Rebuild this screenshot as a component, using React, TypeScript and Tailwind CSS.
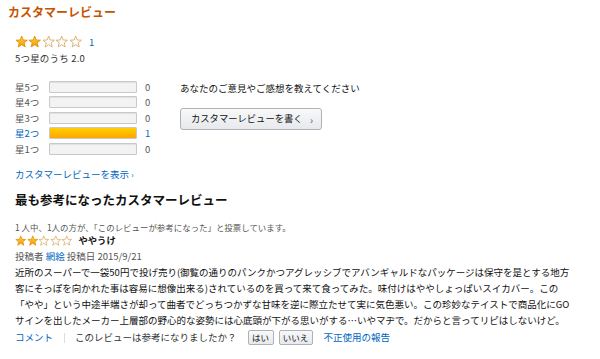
import React from "react";

function Star({ filled, size }: { filled: boolean; size: number }) {
  return (
    <svg width={size} height={size} viewBox="0 0 14 14">
      <defs>
        <linearGradient id="starfill" x1="0" y1="0" x2="0" y2="1">
          <stop offset="0" stopColor="#ffd24a" />
          <stop offset="1" stopColor="#f39c00" />
        </linearGradient>
      </defs>
      <path
        d="M7 1.1 L8.59 5.22 L12.99 5.45 L9.57 8.23 L10.7 12.5 L7 10.1 L3.3 12.5 L4.43 8.23 L1.01 5.45 L5.41 5.22 Z"
        fill={filled ? "url(#starfill)" : "#fff"}
        stroke={filled ? "#e08e00" : "#d8a862"}
        strokeWidth="0.9"
        strokeLinejoin="round"
      />
    </svg>
  );
}

function Stars({ value, size }: { value: number; size: number }) {
  return (
    <div className="flex items-center">
      {[1, 2, 3, 4, 5].map((i) => (
        <Star key={i} filled={i <= value} size={size} />
      ))}
    </div>
  );
}

const rows = [
  { label: "星5つ", count: 0, pct: 0 },
  { label: "星4つ", count: 0, pct: 0 },
  { label: "星3つ", count: 0, pct: 0 },
  { label: "星2つ", count: 1, pct: 100 },
  { label: "星1つ", count: 0, pct: 0 },
];

export default function App() {
  return (
    <div className="w-[600px] h-[359px] overflow-hidden bg-white pl-[8px] font-['Noto_Sans_CJK_JP',sans-serif] text-[#111]">
      <h2 className="h-[24px] leading-[24px] text-[12px] font-bold text-[#c45500]">カスタマーレビュー</h2>

      <div className="ml-[7px]">
        <div className="mt-[11px] h-[14px] flex items-center gap-[7px]">
          <Stars value={2} size={13.4} />
          <a className="text-[9.5px] text-[#0066c0]">1</a>
        </div>
        <div className="mt-[1px] h-[16px] leading-[16px] text-[9.5px] text-[#333] tracking-[0.2px]">5つ星のうち 2.0</div>

        <div className="mt-[13px] flex">
          <div className="w-[165px] flex flex-col">
            {rows.map((r) => {
              const active = r.count > 0;
              return (
                <div key={r.label} className="h-[15.5px] flex items-center text-[9.5px]">
                  <span className={`w-[34px] ${active ? "text-[#0066c0]" : "text-[#555]"}`}>{r.label}</span>
                  <div className="w-[88px] h-[12px] rounded-[1px] border border-[#c9c9c9] bg-[#f3f3f3] shadow-[inset_0_1px_1px_rgba(0,0,0,0.08)] overflow-hidden">
                    {r.pct > 0 && (
                      <div
                        className="h-full bg-gradient-to-b from-[#ffce00] to-[#ffa700]"
                        style={{ width: `${r.pct}%` }}
                      />
                    )}
                  </div>
                  <span className={`ml-[8px] ${active ? "text-[#0066c0]" : "text-[#555]"}`}>{r.count}</span>
                </div>
              );
            })}
          </div>
          <div className="flex flex-col items-start">
            <div className="mt-[1px] h-[16px] leading-[16px] text-[9.5px] text-[#111]">あなたのご意見やご感想を教えてください</div>
            <button className="mt-[12px] w-[142px] h-[22px] flex items-center justify-between pl-[10px] pr-[8px] rounded-[3px] border border-[#adb1b8] bg-gradient-to-b from-[#f7f8fa] to-[#e7e9ec] text-[9.3px] text-[#111] shadow-[0_1px_0_rgba(255,255,255,0.6)_inset]">
              <span>カスタマーレビューを書く</span>
              <span className="text-[10px] text-[#555]">›</span>
            </button>
          </div>
        </div>

        <a className="block mt-[9px] h-[16px] leading-[16px] text-[9.5px] text-[#0066c0]">
          カスタマーレビューを表示 <span className="text-[8px]">›</span>
        </a>

        <h3 className="mt-[8px] h-[20px] leading-[20px] text-[12.5px] font-bold text-[#111]">最も参考になったカスタマーレビュー</h3>

        <div className="mt-[9px] h-[16px] leading-[16px] text-[8.45px] text-[#555]">
          1 人中、1人の方が、「このレビューが参考になった」と投票しています。
        </div>
        <div className="h-[12px] flex items-center gap-[6px]">
          <Stars value={2} size={11.5} />
          <span className="text-[9.3px] font-bold text-[#111]">ややうけ</span>
        </div>
        <div className="mt-[1px] h-[16px] leading-[16px] text-[9.5px] text-[#555]">
          投稿者 <a className="text-[#0066c0]">網絵</a> 投稿日 2015/9/21
        </div>

        <p className="text-[9.5px] leading-[16px] text-[#111] whitespace-nowrap">
          近所のスーパーで一袋50円で投げ売り(御覧の通りのパンクかつアグレッシブでアバンギャルドなパッケージは保守を是とする地方
          <br />
          客にそっぽを向かれた事は容易に想像出来る)されているのを買って来て食ってみた。味付けはややしょっぱいスイカバー。この
          <br />
          「やや」という中途半端さが却って曲者でどっちつかずな甘味を逆に際立たせて実に気色悪い。この珍妙なテイストで商品化にGO
          <br />
          サインを出したメーカー上層部の野心的な姿勢には心底頭が下がる思いがする…いやマヂで。だからと言ってリピはしないけど。
        </p>

        <div className="mt-[2px] h-[16px] flex items-center text-[9.5px]">
          <a className="text-[#0066c0]">コメント</a>
          <span className="ml-[11px] h-[10px] border-l border-[#ddd]" />
          <span className="ml-[10px] text-[#333]">このレビューは参考になりましたか？</span>
          <button className="ml-[11px] w-[26px] h-[15px] rounded-[2px] border border-[#adb1b8] bg-gradient-to-b from-[#f7f8fa] to-[#e7e9ec] text-[8.5px] text-[#111] leading-none">
            はい
          </button>
          <button className="ml-[5px] w-[34px] h-[15px] rounded-[2px] border border-[#adb1b8] bg-gradient-to-b from-[#f7f8fa] to-[#e7e9ec] text-[8.5px] text-[#111] leading-none">
            いいえ
          </button>
          <a className="ml-[11px] text-[#0066c0]">不正使用の報告</a>
        </div>
      </div>
    </div>
  );
}
